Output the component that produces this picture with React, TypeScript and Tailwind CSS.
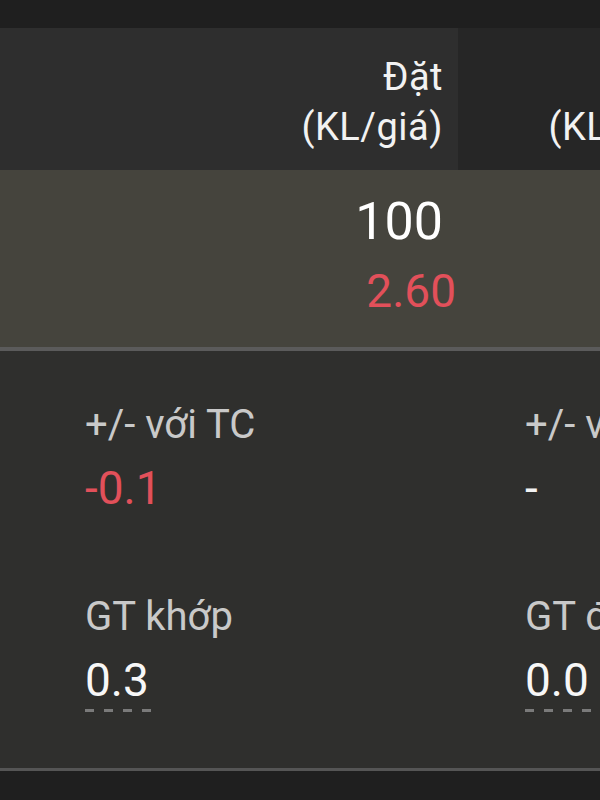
import React from "react";

function Dashes() {
  return (
    <div className="flex gap-[10px] mt-[4px]">
      <div className="w-[9px] h-[3px] bg-[#7a7a7a]" />
      <div className="w-[9px] h-[3px] bg-[#7a7a7a]" />
      <div className="w-[9px] h-[3px] bg-[#7a7a7a]" />
      <div className="w-[9px] h-[3px] bg-[#7a7a7a]" />
    </div>
  );
}

function Stat({
  label,
  value,
  valueClass,
  dashed,
}: {
  label: string;
  value: string;
  valueClass: string;
  dashed?: boolean;
}) {
  return (
    <div className="flex flex-col">
      <div className="text-[40px] leading-[44px] text-[#c9c9c9] whitespace-nowrap">{label}</div>
      <div className={`mt-[16px] text-[46px] leading-[50px] whitespace-nowrap ${valueClass}`}>{value}</div>
      {dashed ? <Dashes /> : null}
    </div>
  );
}

export default function App() {
  return (
    <div
      className="w-[600px] h-[800px] overflow-hidden bg-[#1f1f1f] flex flex-col"
      style={{ fontFamily: "Roboto, 'Noto Sans', sans-serif" }}
    >
      <div className="h-[28px] shrink-0 bg-[#1f1f1f]" />
      <div className="h-[142px] shrink-0 flex">
        <div className="w-[458px] shrink-0 bg-[#2e2e2e] flex flex-col items-end pt-[24px] pr-[15px] text-[38px] leading-[50px] tracking-[0.5px] text-[#f2f2f2]">
          <div>Đặt</div>
          <div>(KL/giá)</div>
        </div>
        <div className="w-[247px] shrink-0 bg-[#262626] flex flex-col items-end pt-[24px] pr-[15px] text-[38px] leading-[50px] tracking-[0.5px] text-[#f2f2f2]">
          <div>Khớp</div>
          <div>(KL/giá)</div>
        </div>
      </div>
      <div className="h-[177px] shrink-0 bg-[#45443d] flex">
        <div className="w-[458px] shrink-0 flex flex-col items-end pt-[24px]">
          <div className="text-[52px] leading-[56px] text-white mr-[15px]">100</div>
          <div className="mt-[13px] text-[46px] leading-[56px] text-[#e2505a] mr-[2px]">2.60</div>
        </div>
      </div>
      <div className="h-[4px] shrink-0 bg-[#5b5b5b]" />
      <div className="h-[417px] shrink-0 bg-[#2f2f2d] grid grid-cols-[440px_440px] grid-rows-[auto_auto] content-start gap-y-[82px] pl-[85px] pt-[52px]">
        <Stat label="+/- với TC" value="-0.1" valueClass="text-[#e2505a]" />
        <Stat label="+/- với TC" value="-" valueClass="text-[#f2f2f2]" />
        <Stat label="GT khớp" value="0.3" valueClass="text-[#f7f7f7]" dashed />
        <Stat label="GT đặt" value="0.0" valueClass="text-[#f7f7f7]" dashed />
      </div>
      <div className="h-[3px] shrink-0 bg-[#555555]" />
      <div className="flex-1 bg-[#1f1f1f]" />
    </div>
  );
}
